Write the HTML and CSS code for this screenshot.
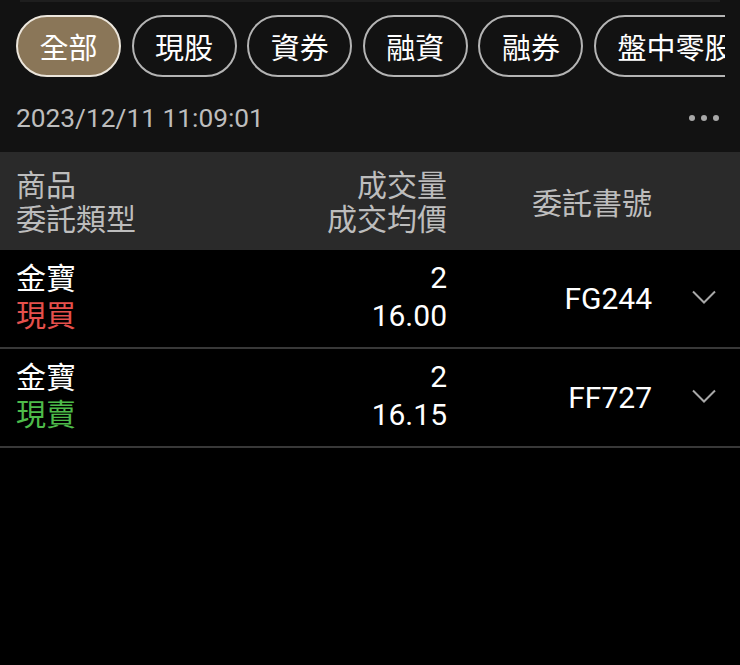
FILE: index.html
```html
<!DOCTYPE html>
<html lang="zh-Hant">
<head>
<meta charset="utf-8">
<title>成交回報</title>
<link rel="stylesheet" href="styles.css">
</head>
<body>
<div class="top">
  <div class="topline"></div>
  <div class="tabs">
    <div class="tab active">全部</div>
    <div class="tab">現股</div>
    <div class="tab">資券</div>
    <div class="tab">融資</div>
    <div class="tab">融券</div>
    <div class="tab">盤中零股</div>
  </div>
  <div class="daterow">
    <span class="date">2023/12/11 11:09:01</span>
    <span class="more"><i></i><i></i><i></i></span>
  </div>
</div>
<div class="grid head">
  <div class="c1"><div>商品</div><div>委託類型</div></div>
  <div class="c2"><div>成交量</div><div>成交均價</div></div>
  <div class="c3">委託書號</div>
  <div class="c4"></div>
</div>
<div class="grid row">
  <div class="c1"><div>金寶</div><div class="buy">現買</div></div>
  <div class="c2 num"><div>2</div><div>16.00</div></div>
  <div class="c3 num">FG244</div>
  <div class="c4"><svg class="chev" width="24" height="14" viewBox="0 0 24 14"><path d="M1 1.5 L12 12.5 L23 1.5" fill="none" stroke="#a8a8a8" stroke-width="2"/></svg></div>
</div>
<div class="grid row">
  <div class="c1"><div>金寶</div><div class="sell">現賣</div></div>
  <div class="c2 num"><div>2</div><div>16.15</div></div>
  <div class="c3 num">FF727</div>
  <div class="c4"><svg class="chev" width="24" height="14" viewBox="0 0 24 14"><path d="M1 1.5 L12 12.5 L23 1.5" fill="none" stroke="#a8a8a8" stroke-width="2"/></svg></div>
</div>
</body>
</html>
```
FILE: styles.css
```css
html, body {
  margin: 0;
  padding: 0;
  background: #000;
  width: 740px;
  height: 665px;
  overflow: hidden;
  font-family: Roboto, "Noto Sans CJK TC", sans-serif;
  color: #fff;
}
.top {
  background: #121212;
  height: 152px;
  display: flex;
  flex-direction: column;
}
.topline {
  height: 2px;
  margin: 0 20px;
  background: #1e1e1e;
}
.tabs {
  display: flex;
  gap: 10.6px;
  margin: 13px 15px 0 16px;
  overflow: hidden;
  height: 62px;
}
.tab {
  flex: none;
  box-sizing: border-box;
  height: 62px;
  padding: 0 21.5px;
  border: 2px solid #b4b4b4;
  border-radius: 31px;
  font-family: "Noto Sans CJK TC", sans-serif;
  font-size: 29px;
  line-height: 58px;
  color: #fff;
  white-space: nowrap;
}
.tab.active {
  background: #8a7658;
  border-color: #ece6dc;
}
.daterow {
  flex: 1;
  display: flex;
  align-items: center;
  justify-content: space-between;
  padding: 6px 21px 0 16px;
}
.date {
  font-size: 26.3px;
  color: #bdbdbd;
}
.more {
  display: flex;
  gap: 6px;
}
.more i {
  width: 6px;
  height: 6px;
  border-radius: 50%;
  background: #a8a8a8;
}
.grid {
  display: grid;
  grid-template-columns: 1fr 160px 205px 88px;
  align-items: center;
  padding-left: 16px;
}
.head {
  background: #2a2a2a;
  height: 98px;
  color: #bdbdbd;
  font-family: "Noto Sans CJK TC", sans-serif;
  font-size: 30px;
  line-height: 34px;
}
.head .c1, .head .c2 {
  margin-top: -2px;
}
.row {
  height: 97px;
  border-bottom: 2px solid #383838;
  font-size: 29px;
  line-height: 38px;
}
.row .c1 {
  font-family: "Noto Sans CJK TC", sans-serif;
  font-size: 30px;
  line-height: 37px;
  margin-top: -7px;
}
.row .c2 {
  margin-top: -4px;
}
.c2, .c3 {
  text-align: right;
}
.num {
  font-size: 30px;
}
.buy { color: #e5504c; }
.sell { color: #4dbb4a; }
.c4 {
  display: flex;
  padding-left: 40px;
}
.chev {
  display: block;
  margin-top: -4px;
}
```
